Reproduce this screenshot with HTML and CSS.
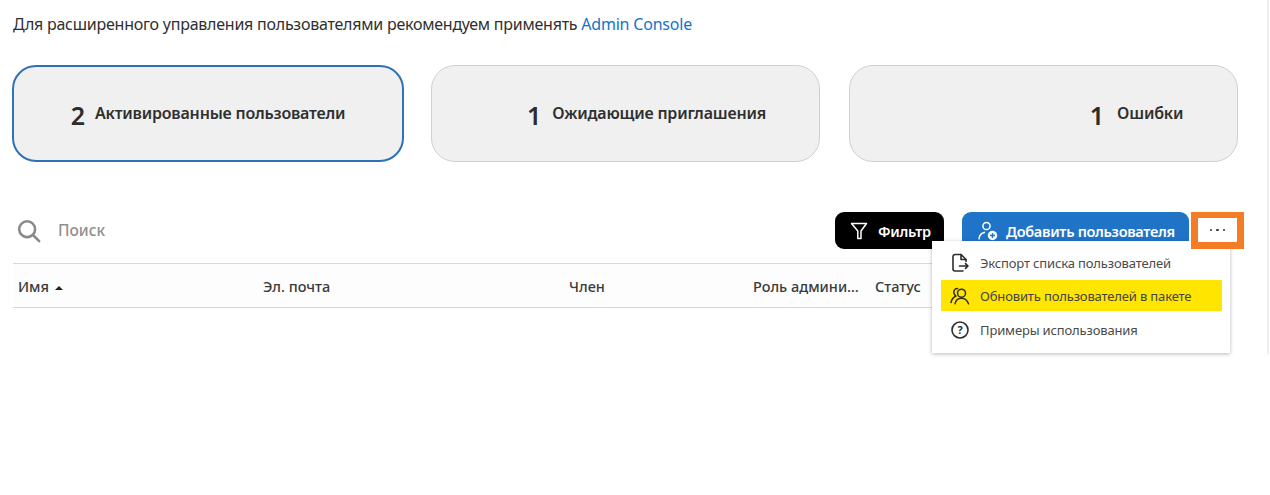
FILE: index.html
```html
<!DOCTYPE html>
<html lang="ru">
<head>
<meta charset="utf-8">
<title>Пользователи</title>
<link rel="stylesheet" href="styles.css">
</head>
<body>
<main class="page">
  <p class="intro">Для расширенного управления пользователями рекомендуем применять <a href="#" class="link">Admin Console</a></p>
  <section class="cards">
    <div class="card card-active"><span class="num">2</span><span class="label">Активированные пользователи</span></div>
    <div class="card card-two"><span class="num">1</span><span class="label">Ожидающие приглашения</span></div>
    <div class="card card-three"><span class="num">1</span><span class="label">Ошибки</span></div>
  </section>
  <section class="toolbar">
    <div class="search">
      <svg class="search-icon" viewBox="0 0 26 26" width="24" height="24" fill="none" stroke="#8a8a8a" stroke-width="2.8" stroke-linecap="round"><circle cx="11" cy="11" r="8.6"/><path d="M17.3 17.3 24 24"/></svg>
      <span class="search-text">Поиск</span>
    </div>
    <button class="btn btn-filter">
      <svg viewBox="0 0 18 18" width="18" height="18" fill="none" stroke="#fff" stroke-width="1.5" stroke-linejoin="round"><path d="M1.5 1.5h15L11 9v7.500H7.800V9z"/></svg>
      Фильтр
    </button>
    <button class="btn btn-add">
      <svg viewBox="0 0 20 20" width="20" height="20" fill="none" stroke="#fff" stroke-width="1.5"><circle cx="8.500" cy="5" r="3.600"/><path d="M1 18.500c0-4 2.500-6.500 6-7.200"/><circle cx="14.500" cy="14.500" r="4.700" fill="#fff" stroke="none"/><path d="M14.500 12v5M12 14.500h5" stroke="#1f74c7" stroke-width="1.400"/></svg>
      Добавить пользователя
    </button>
    <div class="more"><span class="dots"><i></i><i></i><i></i></span></div>
    <div class="menu">
      <div class="menu-item">
        <svg viewBox="0 0 20 20" width="20" height="20" fill="none" stroke="#2c2c2c" stroke-width="1.600" stroke-linejoin="round" stroke-linecap="round"><path d="M13 18H5a2 2 0 0 1-2-2V3.500a2 2 0 0 1 2-2h6l5 5v2"/><path d="M11 1.500v5h5"/><path d="M9.500 13h8.500M15.500 10.600 18 13l-2.500 2.400"/></svg>
        <span>Экспорт списка пользователей</span>
      </div>
      <div class="menu-item menu-item-hl">
        <svg viewBox="0 0 20 20" width="20" height="20" fill="none" stroke="#2c2c2c" stroke-width="1.500" stroke-linecap="round" stroke-linejoin="round"><circle cx="11.500" cy="7.200" r="4"/><path d="M5 17.800c.7-3.300 3.400-5.600 6.500-5.600s5.800 2.300 7 5.600"/><path d="M7.500 2.500C4.600 2.400 3.200 5 4 7.600c.4 1.100 1 1.900 2 2.500C3.700 11 1.700 13 1 16.500"/></svg>
        <span>Обновить пользователей в пакете</span>
      </div>
      <div class="menu-item">
        <svg viewBox="0 0 20 20" width="20" height="20" fill="none" stroke="#2c2c2c" stroke-width="1.600"><circle cx="10" cy="10" r="8"/><text x="10" y="14" text-anchor="middle" class="qmark">?</text></svg>
        <span>Примеры использования</span>
      </div>
    </div>
  </section>
  <section class="thead">
    <div class="th th-name">Имя <span class="sort"></span></div>
    <div class="th th-mail">Эл. почта</div>
    <div class="th th-member">Член</div>
    <div class="th th-role">Роль админи…</div>
    <div class="th th-status">Статус</div>
  </section>
</main>
<div class="rule"></div>
</body>
</html>
```
FILE: styles.css
```css
* { box-sizing: border-box; }
html, body { margin: 0; height: 100%; background: #fff; }
body { font-family: "Noto Sans", "Open Sans", sans-serif; color: #2c2c2c; overflow: hidden; }
.page { padding: 12px 0 0 12px; width: 1240px; }
.intro { margin: 0 0 0 1px; font-size: 16px; line-height: 24px; color: #2f2f2f; letter-spacing: -0.24px; }
.link { color: #1473c9; text-decoration: none; letter-spacing: -0.2px; }
.cards { display: flex; margin-top: 29px; }
.card { height: 97px; width: 389px; border-radius: 24px; background: #f0f0f0; border: 1px solid #d0d0d0; display: flex; align-items: center; justify-content: center; gap: 10px; }
.card-active { width: 392px; border: 2px solid #2d72b8; }
.card-two { margin-left: 27px; padding-left: 42px; gap: 11px; }
.card-three { margin-left: 29px; padding-left: 186px; gap: 13px; }
.num { font-size: 25px; font-weight: 600; color: #2c2c2c; padding-top: 3px; }
.label { font-size: 16px; font-weight: 600; letter-spacing: -0.2px; color: #2f2f2f; padding-bottom: 1px; }
.toolbar { position: relative; display: flex; align-items: center; height: 37px; margin-top: 50px; }
.search { display: flex; align-items: center; gap: 17px; margin-left: 5px; flex: 1; }
.search-icon { display: block; }
.search-text { font-size: 15.500px; font-weight: 500; color: #8f8f8f; padding-bottom: 2px; }
.btn { border: 0; height: 37px; display: flex; align-items: center; font-family: inherit; font-size: 14.500px; font-weight: 600; color: #fff; }
.btn-filter { width: 109px; background: #000; border-radius: 9px; gap: 10px; padding: 0 0 0 15px; margin-right: 18px; letter-spacing: -0.3px; }
.btn-add { width: 227px; background: #1f74c7; border-radius: 9px; gap: 8px; padding: 0 0 0 16px; letter-spacing: -0.3px; }
.more { width: 53px; height: 37px; margin-left: 2px; margin-right: -4px; border: 7px solid #f57c26; border-top-width: 6px; background: #fff; display: flex; align-items: center; justify-content: center; position: relative; z-index: 3; }
.dots { display: flex; gap: 4px; }
.dots i { width: 2.500px; height: 2.500px; border-radius: 50%; background: #333; }
.menu { position: absolute; right: 10px; top: 29px; width: 298px; height: 112px; background: #fff; box-shadow: 0 1px 4px rgba(0,0,0,.28); padding: 5px 8px 0 9px; z-index: 2; }
.menu-item { height: 33px; display: flex; align-items: center; gap: 10px; padding-left: 9px; font-size: 13px; color: #4a4a4a; letter-spacing: -0.15px; }
.menu-item-hl { background: #ffe500; height: 31px; margin: 1px 0 2px; color: #444; }
.qmark { font-family: "Noto Sans", sans-serif; font-size: 11px; font-weight: 700; fill: #2c2c2c; stroke: none; letter-spacing: 0; }
.thead { display: grid; grid-template-columns: 245px 306px 184px 122px 1fr; align-items: center; height: 45px; margin: 14px 0 0 1px; padding-left: 5px; width: 1217px; border-top: 1px solid #d8d8d8; border-bottom: 1px solid #d8d8d8; background: #fdfdfd; }
.th { font-size: 14.500px; font-weight: 500; color: #3a3a3a; }
.th-role { white-space: nowrap; overflow: hidden; }
.sort { display: inline-block; width: 0; height: 0; margin-left: 2px; vertical-align: 2px; border-left: 4px solid transparent; border-right: 4px solid transparent; border-bottom: 4px solid #222; }
.rule { position: absolute; left: 1267px; top: 0; width: 2px; height: 354px; background: #f0f0f0; }
```
